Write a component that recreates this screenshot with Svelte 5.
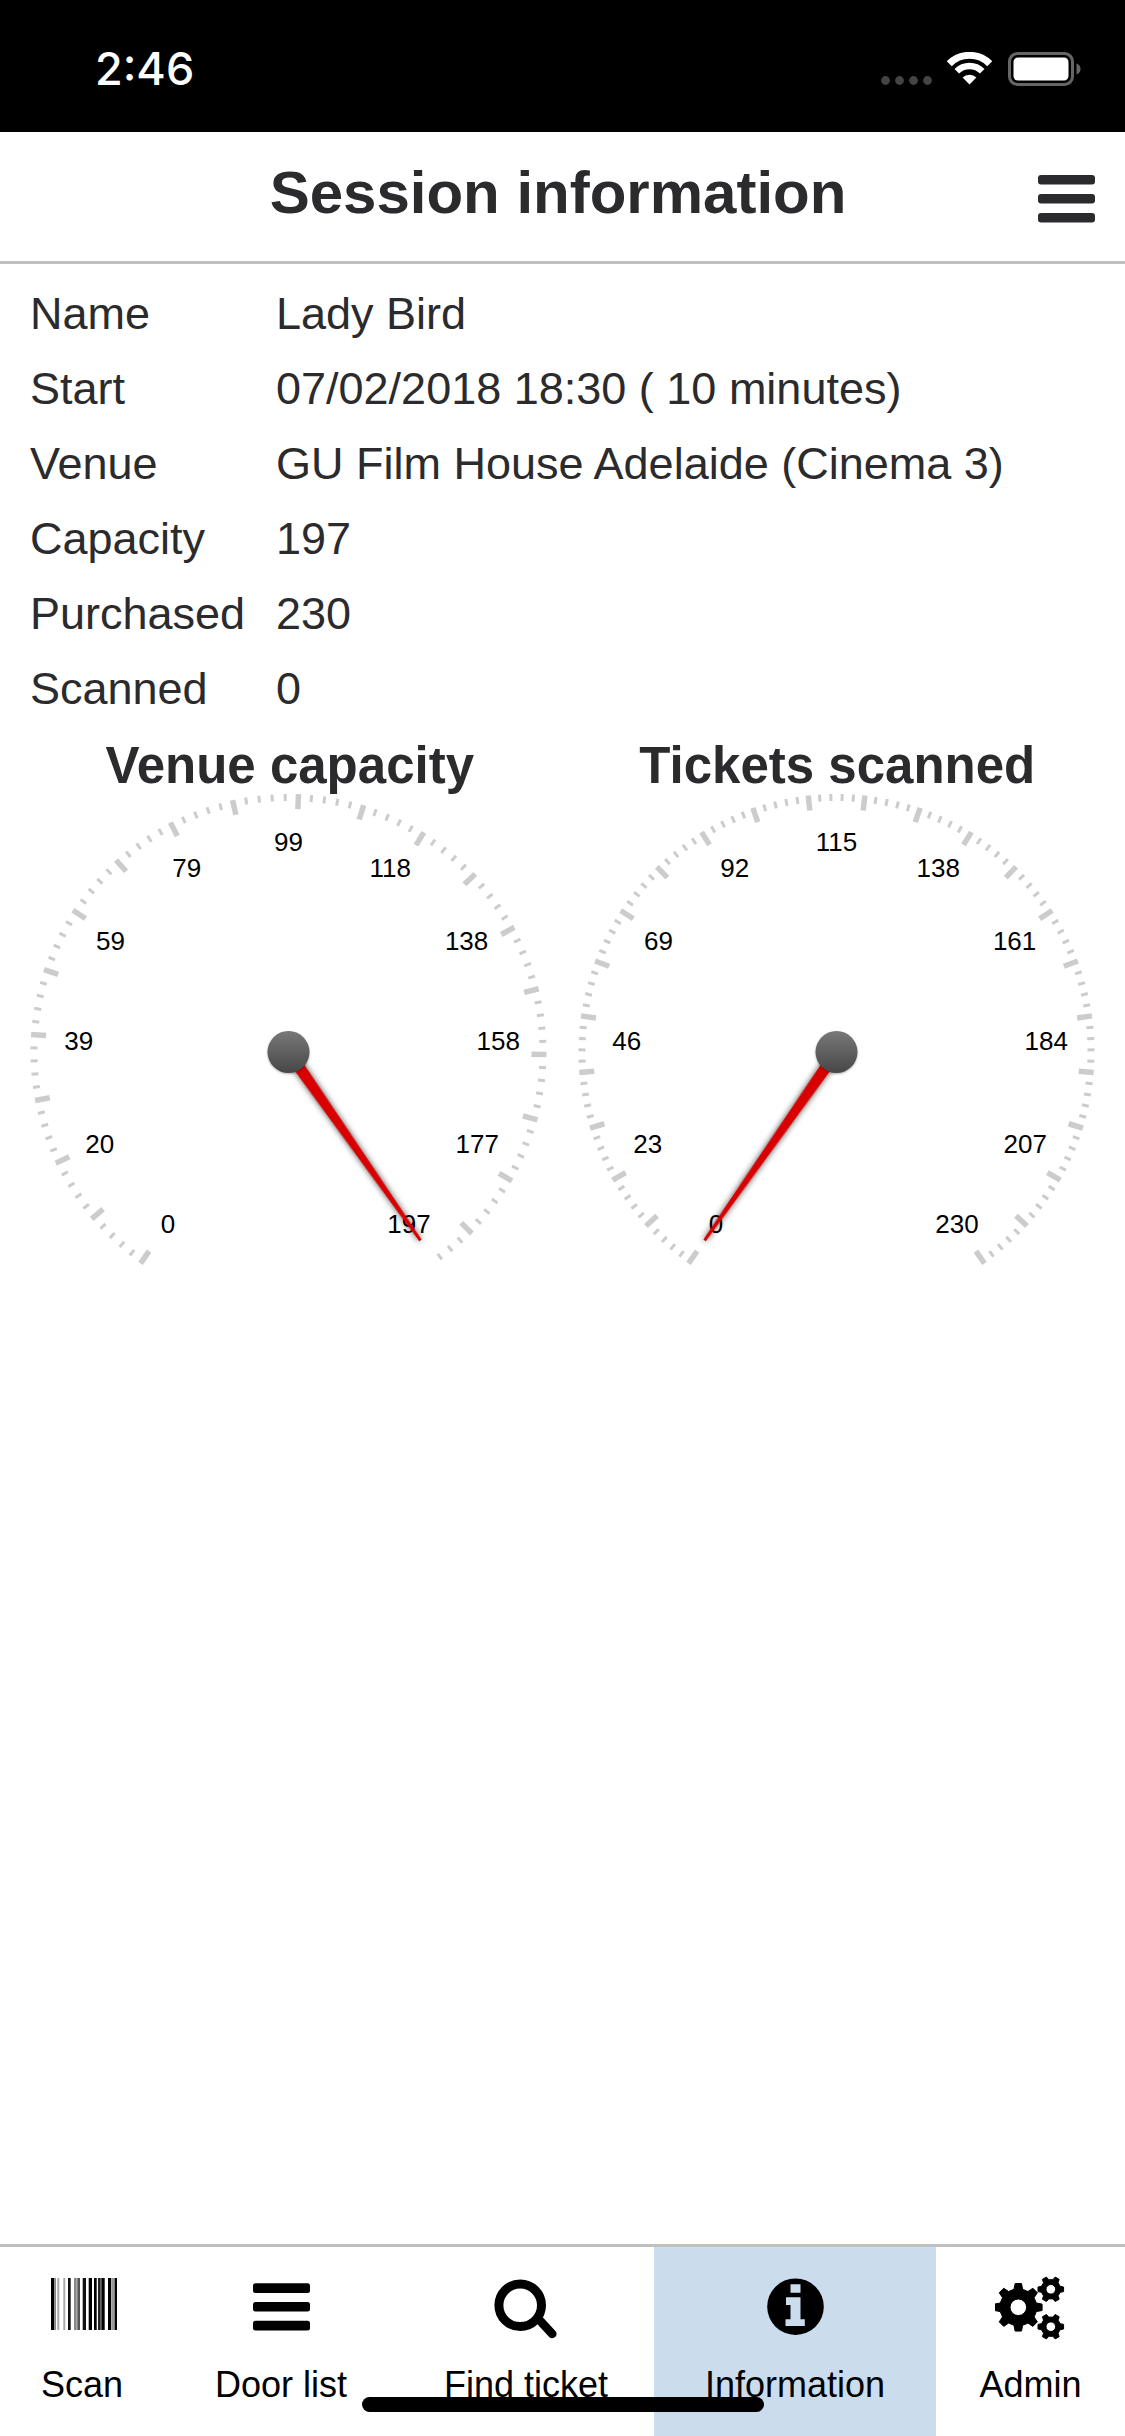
<script>
	// gauge geometry, all in px of the svg box
	const cx = 272.5;
	const cy = 258;
	const R = 258;
	const sweep = 290;

	const rows = [
		["Name", "Lady Bird"],
		["Start", "07/02/2018 18:30 ( 10 minutes)"],
		["Venue", "GU Film House Adelaide (Cinema 3)"],
		["Capacity", "197"],
		["Purchased", "230"],
		["Scanned", "0"]
	];

	function pt(deg, r) {
		const a = ((deg - 90) * Math.PI) / 180;
		return { x: cx + r * Math.cos(a), y: cy + r * Math.sin(a) };
	}

	function makeGauge(title, max, value) {
		const ticks = [];
		const minorStep = 2;
		for (let v = 0, i = 0; v <= max; v += minorStep, i++) {
			const deg = -145 + (v / max) * sweep;
			const major = i % 5 === 0;
			const a = pt(deg, R);
			const b = pt(deg, R - (major ? 15 : 7));
			ticks.push({ x1: a.x, y1: a.y, x2: b.x, y2: b.y, major });
		}
		const labels = [];
		for (let i = 0; i <= 10; i++) {
			const p = pt(-145 + i * 29, 210);
			labels.push({ x: p.x, y: p.y + 9, text: Math.round((max * i) / 10) });
		}
		return { title, ticks, labels, deg: -145 + (value / max) * sweep };
	}

	const gauges = [
		makeGauge("Venue capacity", 197, 197),
		makeGauge("Tickets scanned", 230, 0)
	];

	// needle is drawn pointing straight up, then rotated
	const needle = `${cx - 6},${cy} ${cx - 1.5},${cy - 230} ${cx + 1.5},${cy - 230} ${cx + 6},${cy}`;

	const barcode = [
		[0, 3.3, "#000"], [3.3, 1.7, "#888"], [6.3, 2, "#aaa"], [12.3, 2, "#aaa"],
		[17, 2.7, "#111"], [23, 2.7, "#888"], [26.3, 2.7, "#555"], [31.7, 3.3, "#111"],
		[37.7, 3.3, "#000"], [43, 2.7, "#000"], [47, 2.7, "#222"], [50.3, 3.4, "#000"],
		[57, 3.3, "#000"], [61, 2.7, "#999"], [63.7, 2.6, "#000"]
	];

	// toothed outline plus a round hole, used with evenodd
	function gear(x, y, outer, root, teeth, hole, start) {
		let d = "";
		const step = (Math.PI * 2) / teeth;
		for (let i = 0; i < teeth; i++) {
			const c = start + i * step;
			const list = [
				[c - step * 0.3, root],
				[c - step * 0.17, outer],
				[c + step * 0.17, outer],
				[c + step * 0.3, root]
			];
			for (const [a, r] of list) {
				d += `${d ? "L" : "M"}${(x + r * Math.cos(a)).toFixed(2)} ${(y + r * Math.sin(a)).toFixed(2)}`;
			}
		}
		d += `ZM${x - hole} ${y}a${hole} ${hole} 0 1 0 ${hole * 2} 0a${hole} ${hole} 0 1 0 ${-hole * 2} 0Z`;
		return d;
	}
	const gears = [
		gear(23.3, 33.3, 24, 18.5, 8, 8.3, 0),
		gear(55.8, 15.3, 13, 9.8, 6, 4.8, 0),
		gear(55.8, 52.7, 13, 9.8, 6, 4.8, 0)
	].join("");
</script>

<div class="screen">
	<div class="statusbar">
		<span class="time">2:46</span>
		<div class="status-icons">
			<svg class="dots" width="52" height="9" viewBox="0 0 52 9">
				<circle cx="4.5" cy="4.5" r="4.4" />
				<circle cx="18.5" cy="4.5" r="4.4" />
				<circle cx="32.5" cy="4.5" r="4.4" />
				<circle cx="46.5" cy="4.5" r="4.4" />
			</svg>
			<svg class="wifi" width="45" height="33" viewBox="0 0 45 33">
				<path d="M2.3 11.7A28.5 28.5 0 0 1 42.7 11.7" fill="none" stroke="#fff" stroke-width="7" />
				<path d="M9.8 19.3A18 18 0 0 1 35.2 19.3" fill="none" stroke="#fff" stroke-width="6.5" />
				<path d="M22.5 32.5L15.6 25.6A9.8 9.8 0 0 1 29.4 25.6Z" fill="#fff" />
			</svg>
			<svg class="battery" width="73" height="34" viewBox="0 0 73 34">
				<rect x="1.5" y="1.5" width="63" height="31" rx="8" fill="none" stroke="#666" stroke-width="3" />
				<rect x="5.5" y="5.5" width="55" height="23" rx="4.5" fill="#fff" />
				<path d="M68.5 11.5C71.5 12.5 72.5 14.5 72.5 17C72.5 19.5 71.5 21.5 68.5 22.5Z" fill="#666" />
			</svg>
		</div>
	</div>

	<header class="topbar">
		<h1>Session information</h1>
		<svg class="menu" width="57" height="48" viewBox="0 0 57 48">
			<rect y="0" width="57" height="9.5" rx="3" />
			<rect y="19" width="57" height="9.5" rx="3" />
			<rect y="38" width="57" height="9.5" rx="3" />
		</svg>
	</header>

	<main class="content">
		<dl class="info">
			{#each rows as row}
				<dt>{row[0]}</dt>
				<dd>{row[1]}</dd>
			{/each}
		</dl>

		<div class="gauges">
			{#each gauges as g}
				<section class="gauge">
					<h2>{g.title}</h2>
					<svg width="545.5" height="480" viewBox="0 0 545.5 480">
						<defs>
							<linearGradient id="hub-{g.deg}" x1="0" y1="0" x2="0" y2="1">
								<stop offset="0" stop-color="#787878" />
								<stop offset="1" stop-color="#474747" />
							</linearGradient>
						</defs>
						{#each g.ticks as t}
							<line class={t.major ? "major" : "minor"} x1={t.x1} y1={t.y1} x2={t.x2} y2={t.y2} />
						{/each}
						{#each g.labels as l}
							<text class="scale" x={l.x} y={l.y}>{l.text}</text>
						{/each}
						<polygon class="needle" points={needle} transform="rotate({g.deg} {cx} {cy})" />
						<circle class="hub" cx={cx} cy={cy} r="21" fill="url(#hub-{g.deg})" />
					</svg>
				</section>
			{/each}
		</div>
	</main>

	<nav class="tabs">
		<div class="tab">
			<svg width="70" height="66" viewBox="0 0 70 66">
				{#each barcode as b}
					<rect x={b[0] + 4} y="4" width={b[1]} height="52" fill={b[2]} />
				{/each}
			</svg>
			<span>Scan</span>
		</div>
		<div class="tab">
			<svg width="57" height="66" viewBox="0 0 57 66">
				<rect y="9.3" width="57" height="9.6" rx="2.5" />
				<rect y="28" width="57" height="9.6" rx="2.5" />
				<rect y="46.8" width="57" height="9.6" rx="2.5" />
			</svg>
			<span>Door list</span>
		</div>
		<div class="tab">
			<svg width="66" height="66" viewBox="0 0 66 66">
				<circle cx="27.2" cy="31.3" r="21.3" fill="none" stroke="#000" stroke-width="9" />
				<line x1="45" y1="44.5" x2="59.3" y2="60" stroke="#000" stroke-width="8.5" stroke-linecap="round" />
			</svg>
			<span>Find ticket</span>
		</div>
		<div class="tab active">
			<svg width="57" height="66" viewBox="0 0 57 66">
				<path fill-rule="evenodd" d="M.2 32.7a28.3 28.3 0 1 0 56.6 0a28.3 28.3 0 1 0-56.6 0ZM23.5 10.3h10v8.4h-10ZM19 23.3h14.5v22h4.3v6.7H18.5v-6.7h5V31H19Z" />
			</svg>
			<span>Information</span>
		</div>
		<div class="tab">
			<svg width="71" height="66" viewBox="0 0 71 66">
				<path fill-rule="evenodd" d={gears} stroke="#000" stroke-width="1" stroke-linejoin="round" />
			</svg>
			<span>Admin</span>
		</div>
	</nav>

	<div class="home-indicator"></div>
</div>

<style>
	:global(body) {
		margin: 0;
		background: #fff;
	}
	.screen {
		position: relative;
		width: 1125px;
		height: 2436px;
		display: flex;
		flex-direction: column;
		overflow: hidden;
		font-family: "Liberation Sans", Arial, sans-serif;
		color: #2b2b2d;
		background: #fff;
	}

	.statusbar {
		height: 132px;
		flex: none;
		background: #000;
		display: flex;
		justify-content: space-between;
		align-items: flex-start;
		padding: 0 44px 0 95px;
		box-sizing: border-box;
	}
	.time {
		font-family: Inter, sans-serif;
		font-weight: 500;
		font-size: 45px;
		line-height: 44px;
		margin-top: 47px;
		color: #fff;
	}
	.status-icons {
		display: flex;
		align-items: flex-end;
		gap: 16px;
		height: 34px;
		margin-top: 52px;
	}
	.dots {
		fill: #444;
		margin-bottom: 1px;
		margin-right: -2px;
	}
	.wifi {
		margin-bottom: 1px;
	}

	.topbar {
		height: 132px;
		flex: none;
		box-sizing: border-box;
		display: grid;
		grid-template-columns: 78px 1fr 87px;
		align-items: center;
		border-bottom: 3px solid #c0c0c0;
	}
	.topbar h1 {
		grid-column: 2;
		margin: 0 0 7px;
		font-size: 60px;
		line-height: 70px;
		font-weight: 700;
		text-align: center;
	}
	.menu {
		fill: #2b2b2d;
		margin-top: 5px;
	}

	.content {
		flex: 1;
	}
	.info {
		display: grid;
		grid-template-columns: 246px 1fr;
		grid-auto-rows: 75px;
		align-items: center;
		margin: 12px 0 12px;
		padding-left: 30px;
		font-size: 45px;
	}
	.info dt,
	.info dd {
		margin: 0;
	}

	.gauges {
		display: grid;
		grid-template-columns: repeat(2, 547.5px);
		padding-left: 16px;
	}
	.gauge h2 {
		margin: 0;
		font-size: 51px;
		line-height: 56px;
		font-weight: 700;
		text-align: center;
	}
	.gauge svg {
		display: block;
	}
	.major {
		stroke: #ccc;
		stroke-width: 5.5;
	}
	.minor {
		stroke: #ccc;
		stroke-width: 3;
	}
	.scale {
		font-size: 26px;
		fill: #000;
		text-anchor: middle;
	}
	.needle {
		fill: #d80000;
		filter: drop-shadow(0 0 3px rgba(0, 0, 0, 0.7));
	}
	.hub {
		filter: drop-shadow(0 1px 1px rgba(0, 0, 0, 0.3));
	}

	.tabs {
		height: 192px;
		flex: none;
		box-sizing: border-box;
		display: grid;
		grid-template-columns: 164px 234px 256px 282px 189px;
		border-top: 3px solid #c0c0c0;
		color: #000;
	}
	.tab {
		display: flex;
		flex-direction: column;
		align-items: center;
		padding-top: 27px;
	}
	.tab.active {
		background: #cbdcec;
	}
	.tab span {
		font-size: 36px;
		line-height: 40px;
		margin-top: 25px;
	}

	.home-indicator {
		position: absolute;
		left: 362px;
		top: 2397px;
		width: 402px;
		height: 15px;
		border-radius: 8px;
		background: #000;
	}
</style>
